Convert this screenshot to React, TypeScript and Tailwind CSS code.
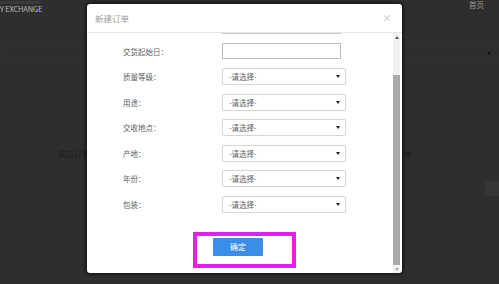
import React from 'react';

const font = { fontFamily: '"Noto Sans CJK SC", "Noto Sans", sans-serif' };

const fields: { label: string; kind: 'input' | 'select' }[] = [
    { label: '交货起始日：', kind: 'input' },
    { label: '质量等级：', kind: 'select' },
    { label: '用途：', kind: 'select' },
    { label: '交收地点：', kind: 'select' },
    { label: '产地：', kind: 'select' },
    { label: '年份：', kind: 'select' },
    { label: '包装：', kind: 'select' },
];

// small css triangle
const Caret: React.FC<{ color?: string; up?: boolean }> = ({ color = '#222', up }) => (
    <span
        className={`inline-block w-0 h-0 border-l-[2.5px] border-r-[2.5px] border-l-transparent border-r-transparent ${up ? 'border-b-[3px]' : 'border-t-[3px]'}`}
        style={up ? { borderBottomColor: color } : { borderTopColor: color }}
    />
);

const FieldRow: React.FC<{ label: string; kind: 'input' | 'select' }> = ({ label, kind }) => (
    <div className="h-[25.5px] flex items-center">
        <div className="w-[135px] shrink-0 pl-[36px] text-[7.5px] text-[#606060] whitespace-nowrap">{label}</div>
        {kind === 'input' ? (
            <div className="w-[119px] h-[16px] border border-[#bbb] bg-white" />
        ) : (
            <div className="w-[124px] h-[17px] border border-[#d6d6d6] rounded-[2px] bg-white flex items-center justify-between pl-[6px] pr-[5px] shadow-[0_0_1px_rgba(0,0,0,0.1)]">
                <span className="text-[7.5px] text-[#606060]">-请选择-</span>
                <Caret />
            </div>
        )}
    </div>
);

const App: React.FC = () => {
    return (
        <div className="relative w-[499px] h-[284px] overflow-hidden bg-[#2e2e2e]" style={font}>
            {/* page behind the overlay */}
            <div className="flex flex-col">
                <div className="h-[44px] flex justify-between items-start border-b border-[#333]">
                    <div className="pt-[1px]">
                        <div className="h-[3px] w-[40px] bg-[#393939]" />
                        <div className="text-[7.5px] leading-[10px] text-[#bdbdbd] tracking-tight">Y EXCHANGE</div>
                    </div>
                    <div className="text-[7.5px] leading-[9px] text-[#9a9a9a] pr-[15px]">首页</div>
                </div>
                <div className="h-[19px] flex justify-between items-center border-b border-[#333] px-[1px]">
                    <span className="text-[7px] text-[#555]">-</span>
                    <span className="pr-[7px] flex"><Caret color="#111" /></span>
                </div>
                <div className="h-[84px]" />
                <div className="flex justify-between items-center h-[14px]">
                    <span className="ml-[58px] text-[8px] text-[#1c1c1c]">实方订单</span>
                    <span className="mr-[87px] text-[8px] text-[#1c1c1c]">关</span>
                </div>
                <div className="flex justify-end mt-[20px]">
                    <div className="w-[14px] h-[15px] bg-[#353535] rounded-l-[2px]" />
                </div>
            </div>

            {/* modal */}
            <div className="absolute left-[87px] top-[4px] w-[315px] h-[269px] bg-white rounded-[3px] shadow-[0_0_3px_2px_rgba(0,0,0,0.45)] flex flex-col overflow-hidden">
                <div className="h-[29px] shrink-0 border-b border-[#e6e6e6] flex items-center justify-between pl-[8px] pr-[10px]">
                    <span className="text-[8.5px] text-[#9a9a9a]">新建订单</span>
                    <span className="text-[10px] text-[#c4c4c4] leading-none">×</span>
                </div>
                <div className="flex-1 flex pr-[2px] min-h-0">
                    <div className="flex-1 relative">
                        <div className="ml-[135px] w-[119px] h-[1px] bg-[#c8c8c8]" />
                        <div className="pt-[4.5px]">
                            {fields.map((f) => (
                                <FieldRow key={f.label} label={f.label} kind={f.kind} />
                            ))}
                        </div>
                        <div className="mt-[15px] ml-[106px] w-[103px] h-[36px] border-[4px] border-[#e51fe5] pt-[2px] pl-[16px]">
                            <div className="w-[50px] h-[18px] bg-[#3a8ee8] rounded-[1px] flex items-center justify-center">
                                <span className="text-[8px] text-white">确定</span>
                            </div>
                        </div>
                    </div>
                    <div className="w-[7px] bg-[#f1f1f1] flex flex-col">
                        <div className="h-[8px] flex items-center justify-center">
                            <Caret up color="#555" />
                        </div>
                        <div className="h-[34px]" />
                        <div className="flex-1 bg-[#a9a9a9]" />
                        <div className="h-[8px] flex items-center justify-center">
                            <Caret color="#aaa" />
                        </div>
                    </div>
                </div>
            </div>
        </div>
    );
};

export default App;
